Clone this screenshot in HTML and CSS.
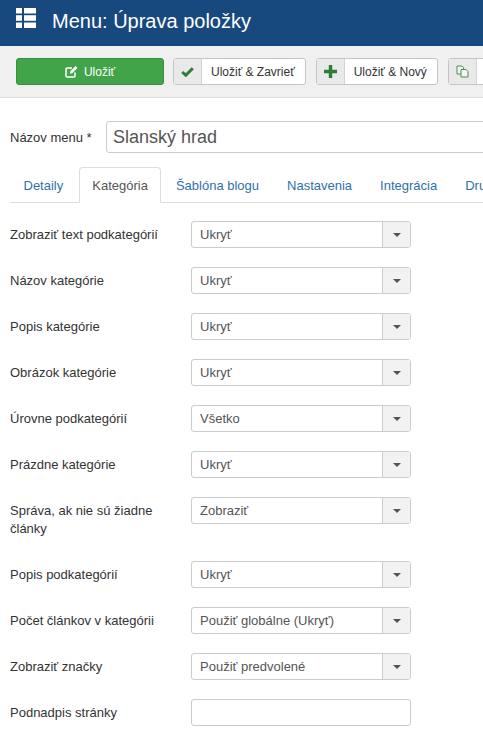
FILE: index.html
```html
<!DOCTYPE html>
<html lang="sk">
<head>
    <meta charset="UTF-8">
    <meta name="viewport" content="width=device-width, initial-scale=1.0">
    <title>Menu: Úprava položky</title>
    <link rel="stylesheet" href="styles.css">
</head>
<body>
    <header class="title-bar">
        <svg class="title-icon" width="20" height="20" viewBox="0 0 20 20" fill="#fff">
            <rect x="0" y="0" width="6" height="5.5"/><rect x="8" y="0" width="12" height="5.5"/>
            <rect x="0" y="7.2" width="6" height="5.6"/><rect x="8" y="7.2" width="12" height="5.6"/>
            <rect x="0" y="14.5" width="6" height="5.5"/><rect x="8" y="14.5" width="12" height="5.5"/>
        </svg>
        <h1>Menu: Úprava položky</h1>
    </header>

    <div class="toolbar">
        <button class="btn-save">
            <svg width="14" height="13" viewBox="0 0 14 13" fill="none" stroke="#fff" stroke-width="1.5">
                <path d="M10 7.5V11a1 1 0 0 1-1 1H2a1 1 0 0 1-1-1V4a1 1 0 0 1 1-1h5"/>
                <path d="M5 6.5 10.5 1 12.5 3 7 8.5H5z" fill="#fff" stroke="none"/>
            </svg>
            Uložiť
        </button>
        <button class="btn">
            <span class="btn-icon">
                <svg width="13" height="10" viewBox="0 0 13 10" fill="none" stroke="#2f7d32" stroke-width="3"><path d="M1.2 5 4.8 8.2 11.8 1.2"/></svg>
            </span>
            <span class="btn-text">Uložiť &amp; Zavrieť</span>
        </button>
        <button class="btn">
            <span class="btn-icon">
                <svg width="13" height="13" viewBox="0 0 13 13" fill="#2f7d32"><path d="M4.8 0h3.4v4.8H13v3.4H8.2V13H4.8V8.2H0V4.8h4.8z"/></svg>
            </span>
            <span class="btn-text">Uložiť &amp; Nový</span>
        </button>
        <button class="btn btn-cut">
            <span class="btn-icon">
                <svg width="13" height="13" viewBox="0 0 13 13" fill="#f4f4f4" stroke="#4d8f50" stroke-width="1"><path d="M1 1h5l1.5 1.5V9H1z"/><path d="M5 4.5h5L12 6.5V12H5z"/></svg>
            </span>
        </button>
    </div>

    <main class="content">
        <div class="title-row">
            <label class="title-label">Názov menu *</label>
            <input class="title-input" type="text" value="Slanský hrad">
        </div>

        <ul class="tabs">
            <li>Detaily</li>
            <li class="active">Kategória</li>
            <li>Šablóna blogu</li>
            <li>Nastavenia</li>
            <li>Integrácia</li>
            <li>Druh</li>
        </ul>

        <div class="form-row">
            <label>Zobraziť text podkategórií</label>
            <div class="select"><span class="select-value">Ukryť</span><span class="select-arrow"></span></div>
        </div>
        <div class="form-row">
            <label>Názov kategórie</label>
            <div class="select"><span class="select-value">Ukryť</span><span class="select-arrow"></span></div>
        </div>
        <div class="form-row">
            <label>Popis kategórie</label>
            <div class="select"><span class="select-value">Ukryť</span><span class="select-arrow"></span></div>
        </div>
        <div class="form-row">
            <label>Obrázok kategórie</label>
            <div class="select"><span class="select-value">Ukryť</span><span class="select-arrow"></span></div>
        </div>
        <div class="form-row">
            <label>Úrovne podkategórií</label>
            <div class="select"><span class="select-value">Všetko</span><span class="select-arrow"></span></div>
        </div>
        <div class="form-row">
            <label>Prázdne kategórie</label>
            <div class="select"><span class="select-value">Ukryť</span><span class="select-arrow"></span></div>
        </div>
        <div class="form-row">
            <label>Správa, ak nie sú žiadne články</label>
            <div class="select"><span class="select-value">Zobraziť</span><span class="select-arrow"></span></div>
        </div>
        <div class="form-row">
            <label>Popis podkategórií</label>
            <div class="select"><span class="select-value">Ukryť</span><span class="select-arrow"></span></div>
        </div>
        <div class="form-row">
            <label>Počet článkov v kategórii</label>
            <div class="select"><span class="select-value">Použiť globálne (Ukryť)</span><span class="select-arrow"></span></div>
        </div>
        <div class="form-row">
            <label>Zobraziť značky</label>
            <div class="select"><span class="select-value">Použiť predvolené</span><span class="select-arrow"></span></div>
        </div>
        <div class="form-row">
            <label>Podnadpis stránky</label>
            <input class="text-input" type="text">
        </div>
    </main>
</body>
</html>
```

FILE: styles.css
```css
* {
    margin: 0;
    padding: 0;
    box-sizing: border-box;
    font-family: "Liberation Sans", Arial, sans-serif;
}

html, body {
    height: 733px;
    overflow: hidden;
    background: #fff;
}

.title-bar {
    display: flex;
    align-items: center;
    height: 46px;
    padding-left: 16px;
    background: #17497f;
    color: #fff;
}

.title-icon {
    flex: none;
    margin-right: 16px;
    margin-top: -10px;
}

.title-bar h1 {
    font-size: 20px;
    font-weight: 400;
    white-space: nowrap;
    margin-top: -3px;
}

.toolbar {
    display: flex;
    gap: 10px;
    height: 52px;
    padding: 12px 0 0 16px;
    background: #f0f0f0;
    border-bottom: 1px solid #ddd;
    overflow: hidden;
}

.toolbar button {
    flex: none;
    height: 27px;
    font-size: 12px;
    border-radius: 3px;
}

.btn-save {
    display: flex;
    align-items: center;
    justify-content: center;
    gap: 5px;
    width: 148px;
    margin-right: -1px;
    background: #41a449;
    border: 1px solid #388e3c;
    color: #fff;
}

.btn {
    display: flex;
    background: #fff;
    border: 1px solid #c4c4c4;
    color: #333;
}

.btn-cut {
    width: 60px;
}

.btn-icon {
    display: flex;
    align-items: center;
    justify-content: center;
    width: 28px;
    background: #e9e9e9;
    border-right: 1px solid #d4d4d4;
}

.btn-text {
    display: flex;
    align-items: center;
    padding: 0 10px 0 9px;
}

.content {
    padding: 23px 0 0 10px;
}

.title-row {
    display: flex;
    align-items: center;
    height: 32px;
}

.title-label {
    flex: none;
    width: 96px;
    font-size: 13px;
    white-space: nowrap;
    color: #333;
}

.title-input {
    flex: none;
    width: 500px;
    height: 32px;
    padding: 0 6px;
    font-size: 18px;
    color: #555;
    border: 1px solid #ccc;
    border-radius: 3px;
}

.tabs {
    display: flex;
    height: 36px;
    margin-top: 14px;
    list-style: none;
    border-bottom: 1px solid #ddd;
    white-space: nowrap;
    font-size: 13px;
    color: #3071a9;
}

.tabs li {
    flex: none;
    height: 36px;
    padding: 10px 12.5px 0;
    margin-right: 1px;
    border: 1px solid transparent;
}

.tabs .active {
    margin-left: 1px;
    color: #555;
    background: #fff;
    border-color: #ddd #ddd #fff;
    border-radius: 4px 4px 0 0;
}

.form-row {
    display: flex;
    align-items: flex-start;
    margin-top: 19px;
    min-height: 27px;
}

.tabs + .form-row {
    margin-top: 18px;
}

.form-row label {
    flex: none;
    width: 181px;
    padding: 5px 20px 4px 0;
    font-size: 13px;
    line-height: 18px;
    color: #333;
}

.select {
    display: flex;
    width: 220px;
    height: 27px;
    border: 1px solid #ccc;
    border-radius: 3px;
    font-size: 13px;
    color: #555;
}

.select-value {
    flex: 1;
    padding: 5px 8px;
    line-height: 15px;
}

.select-arrow {
    display: flex;
    align-items: center;
    justify-content: center;
    width: 28px;
    background: #f2f2f2;
    border-left: 1px solid #ccc;
}

.select-arrow::after {
    content: "";
    border-left: 4px solid transparent;
    border-right: 4px solid transparent;
    border-top: 4px solid #555;
}

.text-input {
    width: 220px;
    height: 27px;
    border: 1px solid #ccc;
    border-radius: 3px;
}
```
